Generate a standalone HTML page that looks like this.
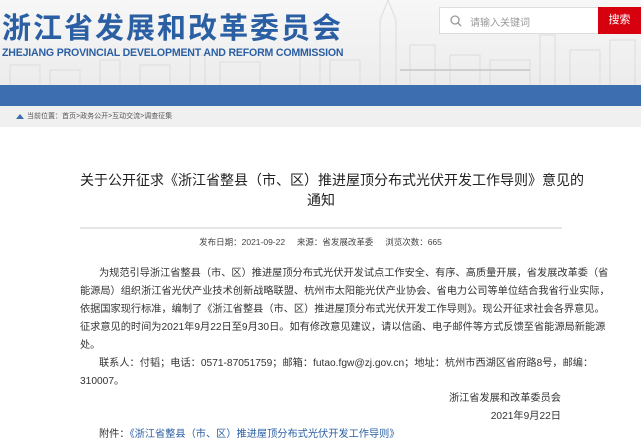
<!DOCTYPE html>
<html><head><meta charset="utf-8"><style>
*{margin:0;padding:0;box-sizing:border-box}
body{width:641px;height:442px;overflow:hidden;background:#fff;font-family:"Liberation Sans","Noto Sans CJK SC",sans-serif;color:#333;position:relative}
.hdr{position:absolute;left:0;top:0;width:641px;height:85px;background:linear-gradient(#f7f7f7,#ececec)}
.sky{position:absolute;left:0;top:0}
.t1{position:absolute;left:2px;top:5px;font-size:29px;font-weight:bold;color:#2b5fa3;letter-spacing:2px;white-space:nowrap;font-family:"Noto Sans CJK SC",sans-serif}
.t2{position:absolute;left:2px;top:47px;font-size:10.6px;font-weight:bold;color:#2b5fa3;white-space:nowrap;letter-spacing:-0.2px}
.search{position:absolute;left:439px;top:7px;width:160px;height:27px;background:#fff;border:1px solid #ddd}
.search span{position:absolute;left:30px;top:6px;font-size:10px;color:#999}
.btn{position:absolute;left:598px;top:7px;width:43px;height:27px;background:#d7000f;color:#fff;font-size:11px;text-align:center;line-height:27px}
.nav{position:absolute;left:0;top:85px;width:641px;height:21px;background:#3d6eb0}
.bc{position:absolute;left:0;top:106px;width:641px;height:21px;background:#f0f0f0;font-size:7px;color:#555;line-height:21px;padding-left:27px}
.bc i{position:absolute;left:16px;top:8px;width:0;height:0;border-left:4px solid transparent;border-right:4px solid transparent;border-bottom:5px solid #3d6eb0}
.title{position:absolute;left:80px;width:482px;text-align:center;font-size:14px;color:#222;white-space:nowrap}
.line{position:absolute;left:80px;top:227px;width:482px;height:2px;background:#e6e6e6}
.meta{position:absolute;left:0;width:641px;top:236px;text-align:center;font-size:8.5px;color:#444;white-space:nowrap}
.p{position:absolute;left:80px;font-size:10.2px;color:#333;white-space:nowrap}
.r{position:absolute;right:80px;font-size:10.2px;color:#333;white-space:nowrap}
a{color:#2b5fa3;text-decoration:none}
</style></head><body>
<div class="hdr">
<svg class="sky" width="641" height="85" viewBox="0 0 641 85">
<g fill="none" stroke="#dcdcdc" stroke-width="1">
<path d="M380 85V20l8-20 8 20v65M300 85V50h20v35M330 85V60h30v25M410 85V45h25v40M450 85V55h30v30M490 85V60h40v25M540 85V35h15v50M570 85V50h30v35M610 85V40h25v45M100 85V60h20v25M140 85V65h30v20M190 85V55h15v30M220 85V62h40v23M10 85V65h30v20M50 85V70h30v15"/>
</g>
<path d="M400 70h130" stroke="#d0d0d0" stroke-width="2"/>
</svg>
<div class="t1">浙江省发展和改革委员会</div>
<div class="t2">ZHEJIANG PROVINCIAL DEVELOPMENT AND REFORM COMMISSION</div>
<div class="search"><svg style="position:absolute;left:10px;top:7px" width="12" height="12"><circle cx="5" cy="5" r="4" fill="none" stroke="#999" stroke-width="1.3"/><path d="M8 8l3 3" stroke="#999" stroke-width="1.3"/></svg><span>请输入关键词</span></div>
<div class="btn">搜索</div>
</div>
<div class="nav"></div>
<div class="bc"><i></i>当前位置：首页&gt;政务公开&gt;互动交流&gt;调查征集</div>
<div class="title" style="top:170px">关于公开征求《浙江省整县（市、区）推进屋顶分布式光伏开发工作导则》意见的</div>
<div class="title" style="top:190px">通知</div>
<div class="line"></div>
<div class="meta">发布日期：2021-09-22&nbsp;&nbsp;&nbsp;&nbsp;&nbsp;来源：省发展改革委&nbsp;&nbsp;&nbsp;&nbsp;&nbsp;浏览次数：665</div>
<div class="p" style="top:264px;left:99px">为规范引导浙江省整县（市、区）推进屋顶分布式光伏开发试点工作安全、有序、高质量开展，省发展改革委（省</div>
<div class="p" style="top:282px">能源局）组织浙江省光伏产业技术创新战略联盟、杭州市太阳能光伏产业协会、省电力公司等单位结合我省行业实际，</div>
<div class="p" style="top:300px">依据国家现行标准，编制了《浙江省整县（市、区）推进屋顶分布式光伏开发工作导则》。现公开征求社会各界意见。</div>
<div class="p" style="top:318px">征求意见的时间为2021年9月22日至9月30日。如有修改意见建议，请以信函、电子邮件等方式反馈至省能源局新能源</div>
<div class="p" style="top:336px">处。</div>
<div class="p" style="top:354px;left:99px">联系人：付韬；电话：0571-87051759；邮箱：futao.fgw@zj.gov.cn；地址：杭州市西湖区省府路8号，邮编：</div>
<div class="p" style="top:372px">310007。</div>
<div class="r" style="top:389px">浙江省发展和改革委员会</div>
<div class="r" style="top:407px">2021年9月22日</div>
<div class="p" style="top:425px;left:99px">附件：<a>《浙江省整县（市、区）推进屋顶分布式光伏开发工作导则》</a></div>
</body></html>
